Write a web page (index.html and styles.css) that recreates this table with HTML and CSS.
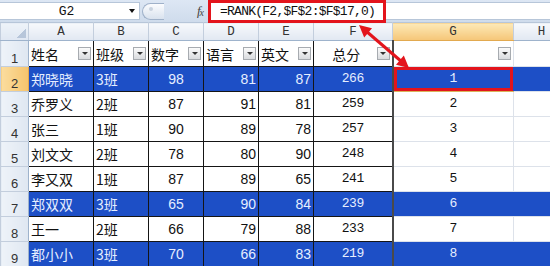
FILE: index.html
```html
<!DOCTYPE html>
<html>
<head>
<meta charset="utf-8">
<link rel="stylesheet" href="styles.css">
</head>
<body>
<div class="app">
  <div class="fbar">
    <div class="namebox"><span class="nb-text">G2</span><span class="nb-arrow"></span></div>
    <div class="fctrl"><span class="knob"><span class="dot"></span></span><span class="fx">f<span class="fxx">x</span></span></div>
    <div class="formula">=RANK(F2,$F$2:$F$17,0)</div>
    <div class="frest"></div>
  </div>
  <table class="sheet">
    <colgroup>
      <col class="w-rh"><col class="w-a"><col class="w-b"><col class="w-c"><col class="w-d"><col class="w-e"><col class="w-f"><col class="w-g"><col class="w-h">
    </colgroup>
    <tr class="colhead">
      <th class="corner"></th><th class="ch">A</th><th class="ch">B</th><th class="ch">C</th><th class="ch">D</th><th class="ch">E</th><th class="ch">F</th><th class="ch sel">G</th><th class="ch">H</th>
    </tr>
    <tr class="r1">
      <th class="rh">1</th>
      <td class="d"><div class="hc"><span class="cn">姓名</span><span class="dd"></span></div></td>
      <td class="d"><div class="hc"><span class="cn">班级</span><span class="dd"></span></div></td>
      <td class="d"><div class="hc"><span class="cn">数字</span><span class="dd"></span></div></td>
      <td class="d"><div class="hc"><span class="cn">语言</span><span class="dd"></span></div></td>
      <td class="d"><div class="hc"><span class="cn">英文</span><span class="dd"></span></div></td>
      <td class="d f"><div class="hc"><span class="cn mid">总分</span><span class="dd"></span></div></td>
      <td class="g"><div class="hc"><span class="mid"></span><span class="dd"></span></div></td>
      <td class="g"></td>
    </tr>
    <tr class="b">
      <th class="rh sel">2</th>
      <td class="d cn">郑晓晓</td><td class="d cn">3班</td><td class="d n c">98</td><td class="d n r">81</td><td class="d n r">87</td><td class="d f m">266</td><td class="g m active">1</td><td class="g"></td>
    </tr>
    <tr>
      <th class="rh">3</th>
      <td class="d cn">乔罗义</td><td class="d cn">2班</td><td class="d n c">87</td><td class="d n r">91</td><td class="d n r">81</td><td class="d f m">259</td><td class="g m">2</td><td class="g"></td>
    </tr>
    <tr>
      <th class="rh">4</th>
      <td class="d cn">张三</td><td class="d cn">1班</td><td class="d n c">90</td><td class="d n r">89</td><td class="d n r">78</td><td class="d f m">257</td><td class="g m">3</td><td class="g"></td>
    </tr>
    <tr>
      <th class="rh">5</th>
      <td class="d cn">刘文文</td><td class="d cn">2班</td><td class="d n c">78</td><td class="d n r">80</td><td class="d n r">90</td><td class="d f m">248</td><td class="g m">4</td><td class="g"></td>
    </tr>
    <tr>
      <th class="rh">6</th>
      <td class="d cn">李又双</td><td class="d cn">1班</td><td class="d n c">87</td><td class="d n r">89</td><td class="d n r">65</td><td class="d f m">241</td><td class="g m">5</td><td class="g"></td>
    </tr>
    <tr class="b">
      <th class="rh">7</th>
      <td class="d cn">郑双双</td><td class="d cn">3班</td><td class="d n c">65</td><td class="d n r">90</td><td class="d n r">84</td><td class="d f m">239</td><td class="g m">6</td><td class="g"></td>
    </tr>
    <tr>
      <th class="rh">8</th>
      <td class="d cn">王一</td><td class="d cn">2班</td><td class="d n c">66</td><td class="d n r">79</td><td class="d n r">88</td><td class="d f m">233</td><td class="g m">7</td><td class="g"></td>
    </tr>
    <tr class="b">
      <th class="rh">9</th>
      <td class="d cn">都小小</td><td class="d cn">3班</td><td class="d n c">70</td><td class="d n r">66</td><td class="d n r">83</td><td class="d f m">219</td><td class="g m">8</td><td class="g"></td>
    </tr>
  </table>
  <svg class="arrow" width="550" height="266" viewBox="0 0 550 266">
    <line x1="366" y1="31" x2="402" y2="62" stroke="#e3141c" stroke-width="3"/>
    <polygon points="359,25 364.2,37.4 372,28.2" fill="#e3141c"/>
    <polygon points="409,68 396,64.8 403.8,55.6" fill="#e3141c"/>
  </svg>
</div>
</body>
</html>
```
FILE: styles.css
```css
html, body {
  margin: 0;
  padding: 0;
  background: #fff;
}
body {
  width: 550px;
  height: 266px;
  overflow: hidden;
  font-family: "Liberation Sans", "Noto Sans CJK SC", sans-serif;
}
.app {
  position: relative;
  width: 550px;
  height: 266px;
  overflow: hidden;
}

/* formula bar */
.fbar {
  display: flex;
  height: 22px;
  background: linear-gradient(#dde7f4, #cfdcec);
  box-sizing: border-box;
}
.namebox {
  width: 140px;
  margin: 2px 0 2px 0;
  background: #fff;
  border: 1px solid #b7c6d9;
  border-left: none;
  box-sizing: border-box;
  display: flex;
  align-items: center;
}
.nb-text {
  flex: 1;
  text-align: center;
  font: 13px "Liberation Mono", monospace;
  color: #111;
  padding-left: 4px;
}
.nb-arrow {
  width: 0;
  height: 0;
  border-left: 3.5px solid transparent;
  border-right: 3.5px solid transparent;
  border-top: 4px solid #111;
  margin-right: 4px;
}
.fctrl {
  width: 68px;
  display: flex;
  align-items: center;
  justify-content: space-between;
  padding: 0 5px 0 2px;
  box-sizing: border-box;
}
.knob {
  width: 22px;
  height: 17px;
  box-sizing: border-box;
  border: 1px solid #9fb1c9;
  border-right: none;
  border-radius: 9px 0 0 9px;
  background: linear-gradient(#fbfcfe, #d9e2ee);
  display: flex;
  align-items: flex-start;
  padding: 3px 0 0 6px;
}
.dot {
  width: 4px;
  height: 4px;
  border-radius: 2px;
  background: #c9d3df;
}
.fx {
  font: italic 13px "Liberation Serif", serif;
  color: #444;
  letter-spacing: -1px;
}
.fxx {
  font-size: 10px;
  position: relative;
  top: 1px;
}
.formula {
  width: 178px;
  height: 23px;
  box-sizing: border-box;
  border: 3px solid #e3141c;
  background: #fff;
  font: 13px "Liberation Mono", monospace;
  letter-spacing: -0.75px;
  color: #111;
  padding-left: 9px;
  line-height: 17px;
  white-space: nowrap;
  position: relative;
  z-index: 2;
}
.frest {
  flex: 1;
  margin: 2px 0 2px 0;
  background: #fff;
  border-top: 1px solid #b7c6d9;
  border-bottom: 1px solid #b7c6d9;
}

/* sheet */
.sheet {
  border-collapse: collapse;
  table-layout: fixed;
  width: 569px;
}
.w-rh { width: 28px; }
.w-a { width: 65px; }
.w-b { width: 55px; }
.w-c { width: 55px; }
.w-d { width: 55px; }
.w-e { width: 55px; }
.w-f { width: 79px; }
.w-g { width: 121px; }
.w-h { width: 56px; }

.colhead th {
  height: 17px;
  padding: 0;
  font: 12.5px "Liberation Mono", monospace;
  font-weight: normal;
  color: #333;
  background: linear-gradient(#f7f9fc, #e1e8f2);
  border: 1px solid #c3cedd;
  border-top-color: #b7c6d9;
  border-bottom-color: #9eb3cc;
}
.colhead th.sel {
  background: linear-gradient(#fde9b8, #f5c677);
  border-bottom-color: #e2a94f;
}
.colhead th.corner {
  background:
    linear-gradient(135deg, transparent 50%, #b7c6da 50%) right 2px bottom 2px / 10px 10px no-repeat,
    linear-gradient(#eef3f9, #dfe7f2);
}
th.rh {
  height: 14px;
  padding: 10px 0 0 0;
  font: 13px "Liberation Sans", sans-serif;
  line-height: 14px;
  font-weight: normal;
  color: #333;
  background: linear-gradient(90deg, #eef3f9, #dfe7f1);
  border: 1px solid #c3cedd;
  border-right-color: #9eb3cc;
}
th.rh.sel {
  background: linear-gradient(90deg, #fbdd9f, #f6c46c);
  border-right-color: #e2a94f;
}
tr.r1 th.rh {
  height: 14px;
  padding-top: 11px;
}
tr.r1 td {
  height: 25px;
}
td {
  height: 24px;
  padding: 0 2px;
  border: 1px solid #dde2ea;
  white-space: nowrap;
  overflow: hidden;
  color: #111;
  line-height: 18px;
}
td.d {
  border-color: #151515;
}
td.f {
  border-right: 2px solid #4a4a4a;
}
.cn {
  font-family: "Noto Sans CJK SC", sans-serif;
  font-size: 14px;
  text-align: left;
  padding-left: 2px;
}
.n {
  font-family: "Liberation Sans", sans-serif;
  font-size: 14px;
}
.c { text-align: center; }
.r { text-align: right; }
.m {
  font-family: "Liberation Mono", monospace;
  font-size: 13px;
  letter-spacing: -0.4px;
  text-align: center;
}
.hc {
  display: flex;
  align-items: center;
}
.hc .cn {
  padding-left: 0;
}
.hc .mid {
  flex: 1;
  text-align: center;
}
.dd {
  width: 13px;
  height: 13px;
  box-sizing: border-box;
  border: 1px solid #a7abb0;
  background: linear-gradient(#fbfbfb, #d9dbde);
  margin-left: auto;
  display: flex;
  align-items: center;
  justify-content: center;
}
.dd::after {
  content: "";
  width: 0;
  height: 0;
  border-left: 3px solid transparent;
  border-right: 3px solid transparent;
  border-top: 3px solid #333;
}
tr.b td {
  background: #1d4fc6;
  color: #e6eeff;
}
tr.b td.g {
  border-left-color: #1d4fc6;
  border-right-color: #1d4fc6;
}
td.active {
  box-shadow: inset 0 0 0 3px #e3141c;
  border-bottom-color: #d9b45c;
}

.arrow {
  position: absolute;
  left: 0;
  top: 0;
  pointer-events: none;
  z-index: 3;
}
```
